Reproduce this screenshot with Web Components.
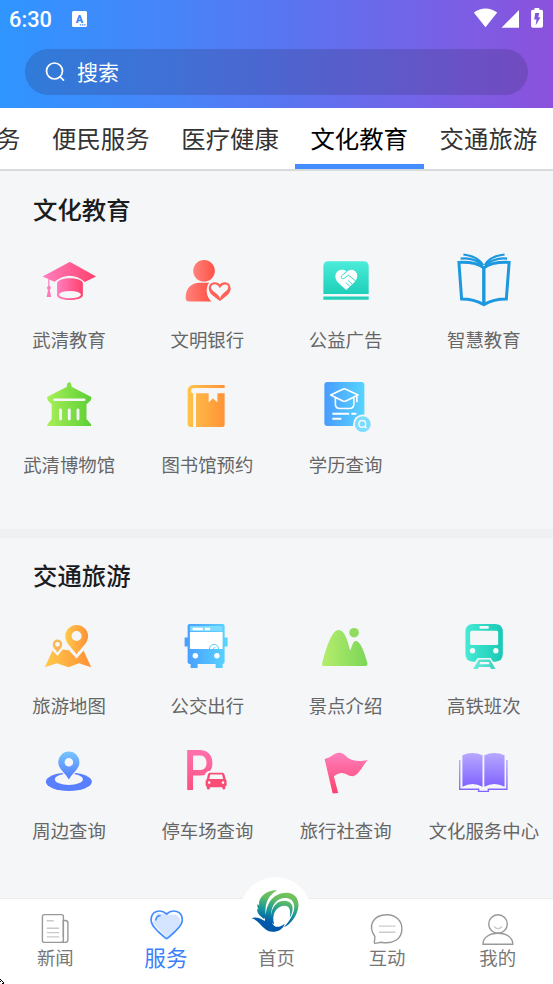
<!DOCTYPE html>
<html lang="zh-CN">
<head>
<meta charset="utf-8">
<title>服务</title>
<style>
html,body{margin:0;height:984px;overflow:hidden;background:#f5f6f8}
body{font-family:"Noto Sans CJK SC",sans-serif}
</style>
</head>
<body>
<city-app></city-app>
<script>
// Each glyph is drawn in screen coordinates; [x, y] is the corner of its view box.
const BG = '#f5f6f8';
const grad = (a, b, vertical) => `<defs><linearGradient id="g" x1="0" y1="0" x2="${vertical ? 0 : 1}" y2="${vertical ? 1 : 0}"><stop stop-color="${a}"/><stop offset="1" stop-color="${b}"/></linearGradient></defs>`;
const X = [39.125, 177.375, 315.625, 453.875];
const NX = [25.3, 135.9, 246.5, 357.1, 467.7];
const ICONS = {
cap: [[X[0],251], grad('#ff7fc0','#ff416c') + `<path fill="url(#g)" d="M42.7 276.6 68.8 262.4Q70 261.7 71.2 262.4L96.2 276.6 85 282Q70 269.5 54.5 281.8Z"/><path fill="url(#g)" d="M57.2 283.2C58 276.5 82 276.5 83 283.2V295.5C82 301.5 58 301.5 57.2 295.5Z"/><ellipse cx="70.1" cy="294.6" rx="11" ry="3.7" fill="${BG}"/><g fill="#ff78b8"><path d="M48.4 278h1.2v14h-1.2z"/><circle cx="49" cy="288" r="1.9"/><path d="M48 290.5h2L51.3 297h-4.5z"/></g>`],
bank: [[X[1],251], grad('#ff837b','#ff5145') + `<circle cx="204.4" cy="270.8" r="10.8" fill="url(#g)"/><path fill="url(#g)" d="M186 298C186 288 192 282.8 200 282.8H209.5C205.5 288 206.5 297 211.8 301.4H189.5Q186 301.4 186 298Z"/><path fill="#ff6057" fill-rule="evenodd" d="M220.2 284.6C217 280.5 209.3 281.6 209.2 288.3 209.1 294 215 296.8 220.3 301 225.5 296.8 231.2 294 231 288.3 230.8 281.6 223.3 280.5 220.2 284.6ZM211.3 287.6C212 283 218 283.2 220.2 288.2 223 282.7 229.8 283.5 228.5 288.3 227.8 291.5 222.4 292.5 220.4 298.4 218.4 292.5 213 293 211.3 287.6Z"/>`],
ad: [[X[2],251], grad('#4cecd9','#1dcfb9',1) + `<path fill="url(#g)" d="M323 294V266.5Q323 261.3 328 261.3H363Q368.3 261.3 368.3 266.5V294Z"/><path fill="#22cfba" d="M323 296.4h45.3v3.4H323z"/><path fill="#fff" d="M346 271.3C341.5 268 335 270.6 335 276.5 335 280 337 281.8 339 283.7L345.8 290 354.5 281.7C359 276.5 356.8 269.5 350.5 269.7Z"/><path fill="none" stroke="#32dbc7" d="M347.5 270.5 341 276Q340.5 279.5 343.5 278.5L348.2 275.2 355.5 281.3M345.5 282.5 349.5 286.5M347.7 280.5 352 284.5"/>`],
open: [[X[3],251], `<g fill="none" stroke="#1d98df" stroke-linejoin="miter"><path stroke-width="3" d="M458.8 262.4C467 262.1 477 262.4 483.7 267.9 490.5 262.4 500.5 262.1 509 262.4L506.2 299C497.5 299 491 300.4 483.7 304.6 476.3 300.4 470 299 461.5 299Z"/><path stroke-width="3.4" d="M483.7 267v38"/><path stroke-width="2.2" d="M460.5 258.6C470 257.5 478 261 482.8 265.6M463.3 254.5C472 255.6 479 258.8 482.9 265M507 258.6C498 257.5 490 261 484.8 265.6M504.4 254.5C495.5 255.6 488 258.8 484.8 265"/></g>`],
museum: [[X[0],376], grad('#a9ef58','#5ccf35') + `<path fill="url(#g)" d="M67 386.8C66.5 381 71.8 380.5 71.7 386.8L91.5 397 90.8 400.5 86.6 404.3V419L91.2 424.2V426H47.6V424.2L51.8 419V404.3L47.8 400.5 47.2 397Z"/><g stroke="${BG}" stroke-linecap="round"><path stroke-width="2.6" d="M54.6 399.7h29.7"/><path stroke-width="2.9" d="M60.6 410v9M69.4 410v9M78.1 410v9"/></g>`],
lib: [[X[1],376], grad('#ffc34b','#ff9336') + `<path fill="url(#g)" fill-rule="evenodd" d="M225 385H194Q188 385 188 391.5V423.5Q188 427 191.5 427H193.5V393.5Q191.3 392.7 191.3 390.7 191.3 388 195 388H225ZM196.4 393.2H209V402.5L213.3 398.3 217.8 402.5V393.2H225V425Q225 427 223 427H196.4Z"/>`],
cert: [[X[2],376], grad('#489cff','#58d4ff') + `<rect x="324" y="382" width="40" height="44" rx="3" fill="url(#g)"/><g fill="none" stroke="#fff" stroke-width="1.6" stroke-linejoin="round"><path d="M330.3 395 342.5 389.2Q344 388.5 345.5 389.2L357.7 395 345.5 401Q344 401.6 342.5 401ZM335 398v6Q335 408.5 339.5 408.5H349Q353.5 408.5 353.5 404V398M356.5 396v6.3"/><path stroke-width="1.9" d="M332 413.8h16.8M351 413.8h5M332 418.8h9"/></g><circle cx="362.4" cy="424.2" r="9.8" fill="${BG}"/><circle cx="362.4" cy="424.2" r="7.9" fill="#7bdcff"/><g fill="none" stroke="#effbff" stroke-width="1.4"><circle cx="361.9" cy="423.9" r="3.4"/><path d="m364.4 426.4 1.8 1.8"/></g>`],
map: [[X[0],617], grad('#ffca4a','#ff9037') + `<g fill="url(#g)"><path d="M45 667.2 52.6 650.5 57.6 655.9 62.8 649.4 69 650.3 76.7 658.4 83.7 650.4 91.3 667.2 79 663.2 68.7 667.2 57 663.2Z"/><path fill-rule="evenodd" d="M76.7 654.5C72.5 648 65.4 643.5 65.4 636.3A11.4 11.4 0 0 1 88.2 636.3C88.2 643.5 81 648 76.7 654.5ZM76.7 631A5 5 0 1 0 76.7 641 5 5 0 1 0 76.7 631Z"/></g><path fill="#fbb652" fill-rule="evenodd" d="M57.6 652.8C56 649.5 52.9 648 52.9 644.3A4.7 4.7 0 0 1 62.3 644.3C62.3 648 59.4 649.5 57.6 652.8ZM57.6 641.9A2.4 2.4 0 1 0 57.6 646.7 2.4 2.4 0 1 0 57.6 641.9Z"/>`],
bus: [[X[1],617], grad('#489cff','#59d5ff') + `<path fill="url(#g)" d="M188 626Q188 624 190 624H223Q225 624 225 626V637.5H228V646.5H225V662Q225 664 223 664V668H216V664H198V668H191V664Q188 664 188 662V646.5H185V637.5H188Z"/><path fill="#7edaff" d="M190.3 626h32.7v5.3h-32.7z"/><path fill="#fff" d="M193 627.8h10.2v2.4H193zM205.2 627.8h5.3v2.4h-5.3zM190.3 632h32.7v17h-32.7z"/><path fill="none" stroke="#57c7ff" d="M209.8 649a4.6 4.6 0 0 1 9.2 0M213.7 649l2-2"/><circle cx="195.7" cy="655.7" r="2.7" fill="#fff"/><circle cx="217.3" cy="655.7" r="2.7" fill="#fff"/>`],
hill: [[X[2],617], grad('#b6ed6c','#7bd658') + `<path fill="url(#g)" d="M323.5 666Q321 666 321.8 663C325 651 331 630 338 630 344.5 630 347 640.5 349.8 650.5 352 646 352.5 641 355.7 641 360.5 641 365 655.5 367 663Q367.5 666 365 666Z"/><circle cx="353.7" cy="632.7" r="4.8" fill="#91dc60"/>`],
train: [[X[3],617], grad('#47ead5','#18c9b5') + `<path fill="url(#g)" d="M473 624H495Q502.7 624 502.7 632V653.5Q502.7 661.5 495 661.7H493L490.5 658H477.5L475 661.7H473Q465.3 661.5 465.3 653.5V632Q465.3 624 473 624Z"/><path fill="url(#g)" fill-opacity=".82" fill-rule="evenodd" d="M478.7 659.5H489.8L495.5 669H491L489.7 667H478.8L477.4 669H473ZM480 662 479.3 664.2H489.4L488.6 662Z"/><g fill="${BG}"><rect x="470" y="630.7" width="28" height="14.3" rx="1.5"/><rect x="479.3" y="626.1" width="9.4" height="2.6" rx="1"/><circle cx="472.4" cy="650.8" r="2.7"/><circle cx="495.7" cy="650.8" r="2.7"/></g>`],
near: [[X[0],742], grad('#76c6ff','#5379ff',1) + `<ellipse cx="69" cy="781.8" rx="23" ry="9.2" fill="#597fff"/><ellipse cx="69" cy="779.3" rx="14" ry="5.7" fill="${BG}"/><path fill="${BG}" d="m57 765 12 17 12-17z"/><path fill="url(#g)" fill-rule="evenodd" d="M69 779.5C65 772.5 58.4 769 58.4 762.2A10.6 10.6 0 0 1 79.6 762.2C79.6 769 73 772.5 69 779.5ZM69 758A4.3 4.3 0 1 0 69 766.6 4.3 4.3 0 1 0 69 758Z"/>`],
park: [[X[1],742], grad('#ff7bbb','#f94570',1) + `<text transform="translate(184 790) scale(.87 1)" font-family="Roboto,sans-serif" font-weight="500" font-size="54.8" fill="url(#g)">P</text><path fill="${BG}" d="M205.5 773.5 208.5 771H224.5L229 780V791H204Z"/><path fill="#f94d76" fill-rule="evenodd" d="M210 772.7H223Q224.4 772.7 225 775L226 779Q227 780 227 781.5V785.5L225.6 786.5V788.5Q225 790 223.3 789.2L222.5 787.3H210.5L209.8 789.2Q207.5 790.2 207.2 788L207 786.5 206 785.5V781.5Q206 780 207.2 779L208.3 774.5Q208.8 772.7 210 772.7ZM210.7 774.6 209.6 779H223.6L222.4 774.6ZM209.6 781.3A1.3 1.3 0 1 0 209.6 783.9 1.3 1.3 0 1 0 209.6 781.3ZM223.4 781.3A1.3 1.3 0 1 0 223.4 783.9 1.3 1.3 0 1 0 223.4 781.3Z"/>`],
flag: [[X[2],742], grad('#ff80bd','#fb416c',1) + `<path fill="url(#g)" d="M324.2 759C331 757.8 333 752.8 339 752.8 347 753 346 764.3 367.3 760 362 766 358 776.2 352 776.2 346 776.2 343 769 333.5 776.3L337.8 793 332.3 793.4Z"/>`],
culture: [[X[3],742], grad('#b8a8ff','#8063ff',1) + `<path fill="url(#g)" d="M462.3 755.3Q472.3 750.5 482.4 755.3V786.8Q472.3 781 462.3 786.8ZM484.2 755.3Q494.3 750.5 504.4 755.3V786.8Q494.3 781 484.2 786.8Z"/><path fill="none" stroke="url(#g)" stroke-width="1.4" d="M459.6 760V789.3H478.5V791.4H488.2V789.3H506.8V760"/>`],
news: [[NX[0],901], `<g fill="none" stroke="#999" stroke-width="1.4"><rect x="42.7" y="914.6" width="21" height="27.8" rx="1.8"/><path d="M63.7 920.5H65.5Q68.2 920.5 68.2 923V940Q68.2 942.4 65.5 942.4H61"/><path d="M63.6 920v17.5"/><path stroke="#c9c9c9" d="M47 920.8h7M47 928.3h12.5M47 932.6h12.5M47 936.9h12.5"/></g>`],
serve: [[NX[1],901], `<path fill="#d5e5ff" d="M157 913Q166.5 915.5 175 914.5C182 917 181 925 178 928L166.8 938 153 923Z"/><path fill="none" stroke="#448dff" stroke-width="1.7" stroke-linejoin="round" d="M166.5 914C160.5 908.5 151 911 151 920 151 925 154.5 928 158.5 932L164.8 937.7Q166.5 939.3 168.2 937.7L174.5 932C178.5 928 182.2 925 182.2 920 182.2 911 172.5 908.5 166.5 914Z"/><path fill="none" stroke="#448dff" stroke-width="1.6" d="M155.7 920.4Q155.8 916 160.5 915.5"/>`],
home: [[NX[2],901], `<defs><linearGradient id="l" gradientUnits="userSpaceOnUse" x1="125" y1="78" x2="98" y2="198"><stop stop-color="#77c35b"/><stop offset=".22" stop-color="#63bd62"/><stop offset=".52" stop-color="#169699"/><stop offset=".8" stop-color="#005bad"/><stop offset="1" stop-color="#0055a6"/></linearGradient></defs><circle cx="276" cy="912.7" r="35.7" fill="#fff"/><g fill="url(#l)" transform="translate(240 865) scale(.33333)"><path d="M113 75C78 77 55 97 59 121L54 117C52 125 55 130 57 134L52 132C54 146 61 154 73 161L80 158C74 125 80 95 113 75Z"/><path d="M80 166C74 120 100 83 141 83 165 83 178 100 177 122 175 150 155 177 133 187 152 165 166 143 164 122 161 98 137 95 120 103 99 113 92 138 96 168Z"/><path d="M95 172C90 132 109 106 135 107 161 108 166 131 151 158 155 131 148 121 134 122 110 124 95 148 104 178Z"/><path d="M36 160C50 154 63 161 76 168L78 146 96 150C95 164 97 176 104 182 113 189 124 185 136 176 129 194 114 201 98 200 68 198 63 166 36 160Z"/></g>`],
chat: [[NX[3],901], `<g fill="none" stroke="#999" stroke-width="1.4"><path d="M375 936.5C367.5 926 373 914.7 387 914.7 396 914.7 402 920.8 402 929 402 939 393 944.5 381.5 942.3L375 943.4Q374.3 943.4 374.5 942.2Z"/><path stroke="#ccc" d="M379 926.1h16.5M379 932.3h16.5"/></g>`],
me: [[NX[4],901], `<g fill="none" stroke="#999" stroke-width="1.4"><circle cx="497.7" cy="924" r="9.3"/><path d="M482.7 944.3C482.7 937.5 489 933.3 497.7 933.3S512.5 937.5 512.5 944.3Z"/><path stroke="#ccc" d="M493.7 926.5Q497.7 931 501.5 926.5"/></g>`]
};

function define(name, css, render) {
  customElements.define(name, class extends HTMLElement {
    constructor() { super(); this.attachShadow({ mode: 'open' }); }
    connectedCallback() { this.shadowRoot.innerHTML = `<style>${css}</style>${render(this)}`; }
  });
}

define('app-icon', ':host{display:block}svg{display:block;overflow:visible}', el => {
  const [[x, y], body] = ICONS[el.getAttribute('name')];
  const h = el.hasAttribute('nav') ? 46 : 60;
  return `<svg width="60" height="${h}" viewBox="${x} ${y} 60 ${h}">${body}</svg>`;
});

define('status-bar', `
:host{display:flex;align-items:center;height:38px;padding:0 10px 0 9px;color:#fff;box-sizing:border-box}
span{font:500 21.8px/38px Roboto,sans-serif;flex:none;width:63px;padding-top:2px}
.sp{flex:1} svg{display:block}`, () => `
<span>6:30</span>
<svg width="15" height="16" viewBox="0 0 15 16"><rect width="15" height="16" rx="1.5" fill="#fff"/><text x="7.4" y="11.6" text-anchor="middle" font-family="Roboto,sans-serif" font-weight="900" font-size="11" fill="#3f88fb">A</text><path stroke="#3f88fb" stroke-width="1.2" stroke-dasharray="1.4 .8" d="M7.8 13.8h6"/></svg>
<div class="sp"></div>
<svg width="70" height="20" viewBox="473 9 70 20"><g fill="#fff"><path d="M473.8 12.5Q485.5 4.5 497.2 12.5L485.5 27.2ZM519 10V27.7H501.5ZM534.5 8h4.8v1.8h2q1.7 0 1.7 1.7V26q0 1.8-1.7 1.8h-8.5q-1.7 0-1.7-1.8V11.5q0-1.7 1.7-1.7h1.7z"/></g><path fill="#8255dc" d="M535.2 13h4.2l-1.2 4.3h2.3L535.6 25.5 536.5 19.5h-2.3z"/></svg>`.replace('viewBox="473 9', 'style="overflow:visible" viewBox="473 9'));

define('search-box', `
:host{display:flex;align-items:center;height:46px;margin:11px 25px 0;padding-left:20px;border-radius:23px;background:rgba(42,40,87,.22);color:#fff;font-size:21px;line-height:44px}
svg{display:block;margin-right:11px}
span{height:46px}`, () => `
<svg width="21" height="22" viewBox="0 0 21 22" fill="none" stroke="#fff" stroke-width="1.7" stroke-linecap="round"><circle cx="9.5" cy="10" r="8"/><path d="m15.3 16 3.2 3.2"/></svg><span><slot></slot></span>`);

define('app-header', ':host{display:block;height:107.5px;background:linear-gradient(90deg,#2f95ff,#4884f9 32%,#5776f1 50%,#7364e8 75%,#8b51dc)}',
  () => '<status-bar></status-bar><search-box>搜索</search-box>');

define('tab-item', `
:host{display:block;flex:none;width:129.2px;height:61.5px;box-sizing:border-box;text-align:center;font-size:24.4px;line-height:60px;color:#333;white-space:nowrap}
:host([active]){color:#000;border-bottom:5px solid #438dff}`, () => '<slot></slot>');

define('tab-strip', `
:host{display:flex;justify-content:flex-end;height:61.5px;width:100%;overflow:hidden;background:#fff;border-bottom:2px solid #d9dadb}
div{display:flex;flex:none}`, () => '<div><slot></slot></div>');

define('service-item', `
:host{display:flex;flex-direction:column;align-items:center;height:125px;font-size:18.4px;line-height:28px;color:#666;white-space:nowrap}
span{margin-top:13.5px}`, el => `<app-icon name="${el.getAttribute('icon')}"></app-icon><span><slot></slot></span>`);

define('service-section', `
:host{display:block;box-sizing:border-box}
h2{box-sizing:border-box;margin:0;padding:18px 0 0 33px;height:80px;font-size:24.4px;font-weight:500;line-height:40px;color:#1b1c1e}
:host([second]) h2{height:79px;padding-top:17px}
.grid{display:grid;grid-template-columns:repeat(4,1fr)}`, el => `<h2>${el.getAttribute('heading')}</h2><div class="grid"><slot></slot></div>`);

define('nav-item', `
:host{display:flex;flex:1;flex-direction:column;align-items:center;padding-top:2px;font-size:18.4px;line-height:20px;color:#777}
:host([active]){color:#3d7ffb;font-size:21.6px}`, el => `<app-icon nav name="${el.getAttribute('icon')}"></app-icon><slot></slot>`);

define('bottom-nav', `
:host{display:flex;height:85px;background:#fff;box-shadow:0 -1px 0 #ececee}`, () => '<slot></slot>');

define('pointer-tip', ':host{position:absolute;left:0;bottom:0}svg{display:block}',
  () => '<svg width="5" height="5"><path d="M0 0h1v1H0zM1 1h1v1H1zM0 2h1v1H0zM2 2h1v1H2zM3 3h1v2H3zM2 4h1v1H2z"/></svg>');

define('city-app', `
:host{display:flex;flex-direction:column;position:relative;width:553px;height:984px;overflow:hidden;background:${BG}}
app-header,tab-strip,bottom-nav{flex:none}
main{flex:1;min-height:0}
.first{height:358px}
hr{margin:0;border:0;height:9px;background:#eff0f2}`, () => {
  const items = list => list.map(([i, t]) => `<service-item icon="${i}">${t}</service-item>`).join('');
  return `<app-header></app-header>
<tab-strip><tab-item>政务服务</tab-item><tab-item>便民服务</tab-item><tab-item>医疗健康</tab-item><tab-item active>文化教育</tab-item><tab-item>交通旅游</tab-item></tab-strip>
<main><service-section class="first" heading="文化教育">${items([['cap','武清教育'],['bank','文明银行'],['ad','公益广告'],['open','智慧教育'],['museum','武清博物馆'],['lib','图书馆预约'],['cert','学历查询']])}</service-section><hr>
<service-section second heading="交通旅游">${items([['map','旅游地图'],['bus','公交出行'],['hill','景点介绍'],['train','高铁班次'],['near','周边查询'],['park','停车场查询'],['flag','旅行社查询'],['culture','文化服务中心']])}</service-section></main>
<bottom-nav><nav-item icon="news">新闻</nav-item><nav-item icon="serve" active>服务</nav-item><nav-item icon="home">首页</nav-item><nav-item icon="chat">互动</nav-item><nav-item icon="me">我的</nav-item></bottom-nav><pointer-tip></pointer-tip>`;
});
</script>
</body>
</html>
